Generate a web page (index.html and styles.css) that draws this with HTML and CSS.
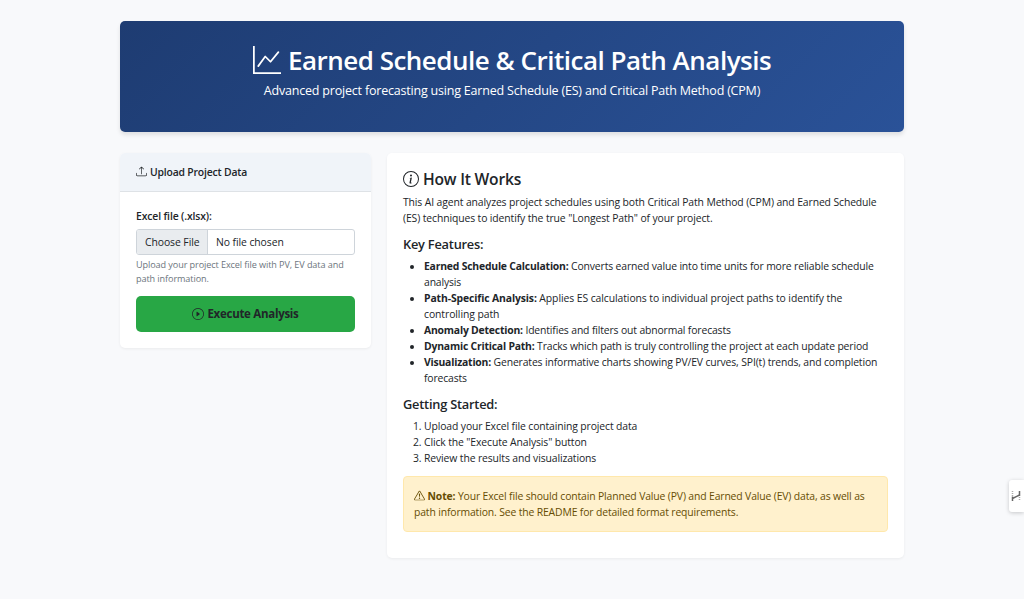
FILE: index.html
```html
<!DOCTYPE html>
<html lang="en">
<head>
<meta charset="utf-8">
<title>Earned Schedule &amp; Critical Path Analysis</title>
<link rel="stylesheet" href="styles.css">
</head>
<body>
<div class="container">
  <header class="hero">
    <h1 class="hero-title"><svg class="icon" viewBox="0 0 16 16"><path fill-rule="evenodd" d="M0 0h1v15h15v1H0zm14.817 3.113a.5.5 0 0 1 .07.704l-4.5 5.5a.5.5 0 0 1-.74.037L7.06 6.767l-3.656 5.027a.5.5 0 0 1-.808-.588l4-5.5a.5.5 0 0 1 .758-.06l2.609 2.61 4.15-5.073a.5.5 0 0 1 .704-.07"/></svg><span>Earned Schedule &amp; Critical Path Analysis</span></h1>
    <p class="hero-sub">Advanced project forecasting using Earned Schedule (ES) and Critical Path Method (CPM)</p>
  </header>
  <div class="columns">
    <section class="card">
      <div class="card-header"><svg class="icon" viewBox="0 0 16 16"><path d="M.5 9.9a.5.5 0 0 1 .5.5v2.5a1 1 0 0 0 1 1h12a1 1 0 0 0 1-1v-2.5a.5.5 0 0 1 1 0v2.5a2 2 0 0 1-2 2H2a2 2 0 0 1-2-2v-2.5a.5.5 0 0 1 .5-.5"/><path d="M7.646 1.146a.5.5 0 0 1 .708 0l3 3a.5.5 0 0 1-.708.708L8.5 2.707V11.5a.5.5 0 0 1-1 0V2.707L5.354 4.854a.5.5 0 1 1-.708-.708z"/></svg><span>Upload Project Data</span></div>
      <div class="card-body">
        <div class="label">Excel file (.xlsx):</div>
        <div class="file-input"><span class="file-button">Choose File</span><span class="file-name">No file chosen</span></div>
        <p class="help">Upload your project Excel file with PV, EV data and path information.</p>
        <button class="execute"><svg class="icon" viewBox="0 0 16 16"><path d="M8 15A7 7 0 1 1 8 1a7 7 0 0 1 0 14m0 1A8 8 0 1 0 8 0a8 8 0 0 0 0 16"/><path d="M6.271 5.055a.5.5 0 0 1 .52.038l3.5 2.5a.5.5 0 0 1 0 .814l-3.5 2.5A.5.5 0 0 1 6 10.5v-5a.5.5 0 0 1 .271-.445"/></svg><span>Execute Analysis</span></button>
      </div>
    </section>
    <section class="card info">
      <h2 class="info-title"><svg class="icon" viewBox="0 0 16 16"><path d="M8 15A7 7 0 1 1 8 1a7 7 0 0 1 0 14m0 1A8 8 0 1 0 8 0a8 8 0 0 0 0 16"/><path d="m8.93 6.588-2.29.287-.082.38.45.083c.294.07.352.176.288.469l-.738 3.468c-.194.897.105 1.319.808 1.319.545 0 1.178-.252 1.465-.598l.088-.416c-.2.176-.492.246-.686.246-.275 0-.375-.193-.304-.533zM9 4.5a1 1 0 1 1-2 0 1 1 0 0 1 2 0"/></svg><span>How It Works</span></h2>
      <p class="intro">This AI agent analyzes project schedules using both Critical Path Method (CPM) and Earned Schedule (ES) techniques to identify the true "Longest Path" of your project.</p>
      <h3 class="subhead">Key Features:</h3>
      <ul class="list">
        <li><strong>Earned Schedule Calculation:</strong> Converts earned value into time units for more reliable schedule analysis</li>
        <li class="loose"><strong>Path-Specific Analysis:</strong> Applies ES calculations to individual project paths to identify the controlling path</li>
        <li><strong>Anomaly Detection:</strong> Identifies and filters out abnormal forecasts</li>
        <li><strong>Dynamic Critical Path:</strong> Tracks which path is truly controlling the project at each update period</li>
        <li><strong>Visualization:</strong> Generates informative charts showing PV/EV curves, SPI(t) trends, and completion forecasts</li>
      </ul>
      <h3 class="subhead">Getting Started:</h3>
      <ol class="list steps">
        <li>Upload your Excel file containing project data</li>
        <li>Click the "Execute Analysis" button</li>
        <li>Review the results and visualizations</li>
      </ol>
      <div class="note"><svg class="icon" viewBox="0 0 16 16"><path d="M7.938 2.016A.13.13 0 0 1 8.002 2a.13.13 0 0 1 .063.016.15.15 0 0 1 .054.057l6.857 11.667c.036.06.035.124.002.183a.2.2 0 0 1-.054.06.1.1 0 0 1-.066.017H1.146a.1.1 0 0 1-.066-.017.2.2 0 0 1-.054-.06.18.18 0 0 1 .002-.183L7.884 2.073a.15.15 0 0 1 .054-.057m1.044-.45a1.13 1.13 0 0 0-1.96 0L.165 13.233c-.457.778.091 1.767.98 1.767h13.713c.889 0 1.438-.99.98-1.767z"/><path d="M7.002 12a1 1 0 1 1 2 0 1 1 0 0 1-2 0M7.1 5.995a.905.905 0 1 1 1.8 0l-.35 3.507a.552.552 0 0 1-1.1 0z"/></svg> <strong>Note:</strong> Your Excel file should contain Planned Value (PV) and Earned Value (EV) data, as well as path information. See the README for detailed format requirements.</div>
    </section>
  </div>
</div>
<div class="side-tab"><svg class="side-icon" viewBox="0 0 10 12"><path d="M1.5 6.5V11M8.5 1v5M1.5 8.5l7-3.5"/><path class="dots" d="M1.5 1v5M8.5 7v4"/></svg></div>
</body>
</html>
```
FILE: styles.css
```css
* { box-sizing: border-box; }
body {
  margin: 0;
  height: 599px;
  overflow: hidden;
  background: #f8f9fb;
  color: #212529;
  font: 400 10.4px/16px "Open Sans", "Noto Sans", sans-serif;
  letter-spacing: -0.14px;
}
h1, h2, h3, p, ul, ol { margin: 0; }
.icon { width: 1em; height: 1em; fill: currentColor; flex: none; }
.container { width: 784px; margin: 0 auto; padding-top: 21px; }
.hero {
  height: 111px;
  padding-top: 21px;
  border-radius: 5px;
  background: linear-gradient(135deg, #1e3c72, #2a5298);
  box-shadow: 0 3px 4px rgba(0, 0, 0, 0.1);
  color: #fff;
  text-align: center;
}
.hero-title {
  display: flex;
  justify-content: center;
  align-items: center;
  gap: 7px;
  height: 35px;
  font-size: 26px;
  font-weight: 600;
  letter-spacing: -0.5px;
}
.hero-title .icon { width: 28px; height: 28px; }
.hero-sub { margin-top: 4px; font-size: 12.5px; line-height: 20px; letter-spacing: -0.2px; }
.columns { display: grid; grid-template-columns: 251px 517px; gap: 16px; align-items: start; margin-top: 21px; }
.card { border-radius: 5px; background: #fff; box-shadow: 0 1px 3px rgba(0, 0, 0, 0.06); overflow: hidden; }
.card-header {
  display: flex;
  align-items: center;
  gap: 3px;
  height: 39px;
  padding: 0 16px;
  border-bottom: 1px solid #dee2e6;
  background: #f0f4f9;
  font-weight: 600;
  letter-spacing: -0.18px;
}
.card-header .icon { width: 11px; height: 11px; margin-top: -1px; }
.card-body { padding: 16px; }
.label { font-weight: 600; letter-spacing: -0.13px; }
.file-input {
  display: flex;
  height: 26px;
  margin-top: 5px;
  border: 1px solid #ced4da;
  border-radius: 3px;
  overflow: hidden;
  line-height: 24px;
  letter-spacing: -0.08px;
}
.file-button { width: 71px; padding-left: 8px; border-right: 1px solid #ced4da; background: #e9ecef; }
.file-name { padding-left: 8px; }
.help { margin-top: 3px; color: #6c757d; font-size: 9.1px; line-height: 14px; letter-spacing: -0.09px; }
.execute {
  display: flex;
  justify-content: center;
  align-items: center;
  gap: 3px;
  width: 100%;
  height: 36px;
  margin-top: 10px;
  border: 0;
  border-radius: 5px;
  background: #28a745;
  color: #212529;
  font: 700 11.5px/18px "Open Sans", sans-serif;
  letter-spacing: -0.28px;
}
.execute .icon { width: 12px; height: 12px; }
.info { height: 405px; padding: 16px; }
.info-title { display: flex; align-items: center; gap: 4px; height: 20px; font-size: 15.6px; font-weight: 600; letter-spacing: -0.2px; }
.info-title .icon { width: 16px; height: 16px; }
.intro { margin-top: 5px; letter-spacing: -0.115px; }
.subhead { margin: 10px 0 6px; font-size: 12.8px; font-weight: 600; line-height: 16px; letter-spacing: -0.22px; }
.list { padding-left: 21px; }
.list strong { letter-spacing: -0.2px; }
.loose { letter-spacing: -0.08px; }
.loose strong { letter-spacing: -0.12px; }
.steps { letter-spacing: -0.12px; }
.note {
  height: 56px;
  margin-top: 10px;
  padding: 11px 10px;
  border: 1px solid #ffe8ac;
  border-radius: 4px;
  background: #fff1cd;
  color: #664d03;
}
.note .icon { width: 11px; height: 11px; vertical-align: -1px; }
.side-tab {
  position: absolute;
  top: 480px;
  right: 0;
  display: flex;
  align-items: center;
  width: 15px;
  height: 32px;
  padding-left: 2px;
  border-radius: 3px 0 0 3px;
  background: #fff;
  box-shadow: 0 1px 4px rgba(0, 0, 0, 0.2);
}
.side-icon { width: 10px; height: 12px; fill: none; stroke: #666; stroke-width: 1.5; }
.dots { stroke: #aaa; stroke-dasharray: 1 1; }
```
